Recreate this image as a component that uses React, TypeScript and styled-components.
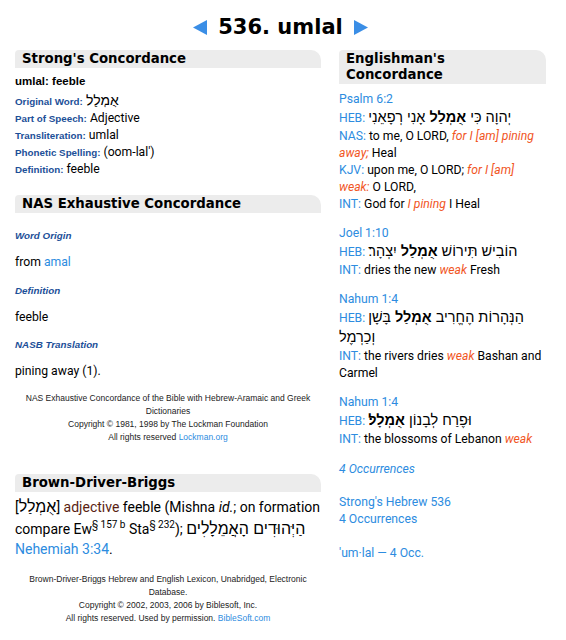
import React from "react";
import styled, { createGlobalStyle } from "styled-components";

const GlobalStyle = createGlobalStyle`
  html, body { margin: 0; padding: 0; background: #fff; }
  body { font-family: Roboto, "Liberation Sans", "DejaVu Sans", sans-serif; color: #000; }
`;

const LINK = "#2d8ce0";
const LABEL = "#1c4f98";
const ORANGE = "#f1561f";

const Page = styled.div`
  padding: 12px 20px 20px 15px;
`;

const TitleBar = styled.h1`
  margin: 0;
  display: flex;
  justify-content: center;
  align-items: center;
  gap: 11px;
  font: bold 21px/30px "DejaVu Sans", Verdana, sans-serif;
  color: #000;
`;

const Arrow = styled.svg`
  width: 14px;
  height: 15px;
  display: block;
`;

const Columns = styled.div`
  margin-top: 8px;
  display: grid;
  grid-template-columns: 306px 207px;
  column-gap: 18px;
  align-items: start;
`;

const Column = styled.div`
  display: flex;
  flex-direction: column;
`;

const Heading = styled.h2<{ $gap?: number }>`
  margin: ${(p) => p.$gap ?? 0}px 0 0;
  padding: 1px 14px 1px 7px;
  background: #ececec;
  border-radius: 4px 10px 0 0;
  font: bold 13.3px/16px "DejaVu Sans", Verdana, sans-serif;
  color: #000;
`;

const Block = styled.div<{ $gap?: number }>`
  margin-top: ${(p) => p.$gap ?? 0}px;
`;

const Row = styled.div`
  font-size: 12.2px;
  line-height: 17px;
`;

const Headword = styled.div`
  font: bold 11.5px/17px "Liberation Sans", Arial, sans-serif;
  margin-bottom: 2px;
`;

const Label = styled.span`
  font: bold 9.8px "Liberation Sans", Arial, sans-serif;
  color: ${LABEL};
`;

const Heb = styled.span<{ $size?: number; $lh?: number }>`
  font-family: "Liberation Sans", "DejaVu Sans", sans-serif;
  font-size: ${(p) => p.$size ?? 14}px;
  ${(p) => (p.$lh ? `line-height: ${p.$lh}px;` : "")}
`;

const SubLabel = styled.div`
  margin-top: 10.2px;
  font: italic bold 9.8px/17px "Liberation Sans", Arial, sans-serif;
  color: ${LABEL};
`;

const Para = styled.div`
  margin-top: 10.2px;
  font-size: 12.2px;
  line-height: 17px;
`;

const A = styled.a`
  color: ${LINK};
  text-decoration: none;
`;

const Credit = styled.div<{ $gap: number }>`
  margin-top: ${(p) => p.$gap}px;
  text-align: center;
  font: 8.5px/13px "Liberation Sans", Arial, sans-serif;
  color: #222;
`;

const BdbText = styled.div`
  margin-top: 4px;
  font-size: 14px;
  line-height: 18px;
  sup {
    font-size: 10px;
    line-height: 0;
  }
`;

const Pos = styled.span`
  color: #5a1e12;
`;

const Verse = styled.div<{ $gap: number }>`
  margin-top: ${(p) => p.$gap}px;
  font-size: 12.2px;
  line-height: 17px;
`;

const VLine = styled.div`
  line-height: 19px;
`;

const Tag = styled.span`
  color: ${LINK};
`;

const Em = styled.i`
  color: ${ORANGE};
`;

const Extra = styled.div<{ $gap: number; $italic?: boolean }>`
  margin-top: ${(p) => p.$gap}px;
  font-size: 12.2px;
  line-height: 17px;
  font-style: ${(p) => (p.$italic ? "italic" : "normal")};
  color: ${LINK};
`;

const LeftArrow = () => (
  <Arrow viewBox="0 0 14 15">
    <polygon points="0,7.5 14,0 14,15" fill="#3a8ee6" />
  </Arrow>
);

const RightArrow = () => (
  <Arrow viewBox="0 0 14 15">
    <polygon points="14,7.5 0,0 0,15" fill="#3a8ee6" />
  </Arrow>
);

type VerseData = {
  ref: string;
  heb: React.ReactNode;
  lines: { tag: string; content: React.ReactNode }[];
};

const verses: VerseData[] = [
  {
    ref: "Psalm 6:2",
    heb: (
      <>
        יְהוָה כִּי <b>אֻמְלַל</b> אָנִי רְפָאֵנִי
      </>
    ),
    lines: [
      {
        tag: "NAS",
        content: (
          <>
            to me, O LORD, <Em>{"for I [am] pining"}{" away;"}</Em> Heal
          </>
        ),
      },
      {
        tag: "KJV",
        content: (
          <>
            upon me, O LORD; <Em>{"for I [am]"}{" weak:"}</Em> O LORD,
          </>
        ),
      },
      {
        tag: "INT",
        content: (
          <>
            God for <Em>I pining</Em> I Heal
          </>
        ),
      },
    ],
  },
  {
    ref: "Joel 1:10",
    heb: (
      <>
        הוֹבִישׁ תִּירוֹשׁ <b>אֻמְלַל</b> יִצְהָר׃
      </>
    ),
    lines: [
      {
        tag: "INT",
        content: (
          <>
            dries the new <Em>weak</Em> Fresh
          </>
        ),
      },
    ],
  },
  {
    ref: "Nahum 1:4",
    heb: (
      <>
        {"הַנְּהָרוֹת הֶחֱרִיב "}
        <b>אֻמְלַל</b>
        {" בָּשָׁן"}
        {" וְכַרְמֶל"}
      </>
    ),
    lines: [
      {
        tag: "INT",
        content: (
          <>
            the rivers dries <Em>weak</Em>
            {" Bashan and"}
            {" Carmel"}
          </>
        ),
      },
    ],
  },
  {
    ref: "Nahum 1:4",
    heb: (
      <>
        וּפֶרַח לְבָנוֹן <b>אֻמְלָל׃</b>
      </>
    ),
    lines: [
      {
        tag: "INT",
        content: (
          <>
            the blossoms of Lebanon <Em>weak</Em>
          </>
        ),
      },
    ],
  },
];

const strongRows: { label: string; value: React.ReactNode }[] = [
  { label: "Original Word:", value: <Heb $size={14}>אֻמְלַל</Heb> },
  { label: "Part of Speech:", value: "Adjective" },
  { label: "Transliteration:", value: "umlal" },
  { label: "Phonetic Spelling:", value: "(oom-lal')" },
  { label: "Definition:", value: "feeble" },
];

export default function App() {
  return (
    <>
      <GlobalStyle />
      <Page>
        <TitleBar>
          <LeftArrow />
          <span>536. umlal</span>
          <RightArrow />
        </TitleBar>
        <Columns>
          <Column>
            <Heading>Strong's Concordance</Heading>
            <Block $gap={5}>
              <Headword>umlal: feeble</Headword>
              {strongRows.map((r) => (
                <Row key={r.label}>
                  <Label>{r.label}</Label> {r.value}
                </Row>
              ))}
            </Block>

            <Heading $gap={17}>NAS Exhaustive Concordance</Heading>
            <Block $gap={4}>
              <SubLabel>Word Origin</SubLabel>
              <Para>
                from <A href="#">amal</A>
              </Para>
              <SubLabel>Definition</SubLabel>
              <Para>feeble</Para>
              <SubLabel>NASB Translation</SubLabel>
              <Para>pining away (1).</Para>
            </Block>
            <Credit $gap={12}>
              {"NAS Exhaustive Concordance of the Bible with Hebrew-Aramaic and Greek"}
              {" Dictionaries"}
              <br />
              Copyright © 1981, 1998 by The Lockman Foundation
              <br />
              All rights reserved <A href="#">Lockman.org</A>
            </Credit>

            <Heading $gap={30}>Brown-Driver-Briggs</Heading>
            <BdbText>
              [<Heb $size={16} $lh={22}>אֻמְלַל</Heb>] <Pos>adjective</Pos> <span>feeble (Mishna </span>
              <i>id.</i>
              <span>; on formation</span> <span>compare Ew</span>
              <sup>§ 157 b</sup> <span>Sta</span>
              <sup>§ 232</sup>
              <span>);</span>{" "}
              <Heb $size={16} $lh={22}>
                הַיְּהוּדִים הָאֲמֵלָלִים
              </Heb>{" "}
              <A href="#">Nehemiah 3:34</A>.
            </BdbText>
            <Credit $gap={15}>
              {"Brown-Driver-Briggs Hebrew and English Lexicon, Unabridged, Electronic"}
              {" Database."}
              <br />
              Copyright © 2002, 2003, 2006 by Biblesoft, Inc.
              <br />
              All rights reserved. Used by permission. <A href="#">BibleSoft.com</A>
            </Credit>
          </Column>

          <Column>
            <Heading>Englishman's Concordance</Heading>
            {verses.map((v, i) => (
              <Verse key={i} $gap={i === 0 ? 6.5 : 12}>
                <A href="#">{v.ref}</A>
                <VLine>
                  <Tag>HEB:</Tag>{" "}
                  <Heb $size={14.5} $lh={18}>
                    {v.heb}
                  </Heb>
                </VLine>
                {v.lines.map((l) => (
                  <div key={l.tag}>
                    <Tag>{l.tag}:</Tag> {l.content}
                  </div>
                ))}
              </Verse>
            ))}
            <Extra $gap={13} $italic>
              4 Occurrences
            </Extra>
            <Extra $gap={16}>
              Strong's Hebrew 536
              <br />4 Occurrences
            </Extra>
            <Extra $gap={17}>'um·lal — 4 Occ.</Extra>
          </Column>
        </Columns>
      </Page>
    </>
  );
}
